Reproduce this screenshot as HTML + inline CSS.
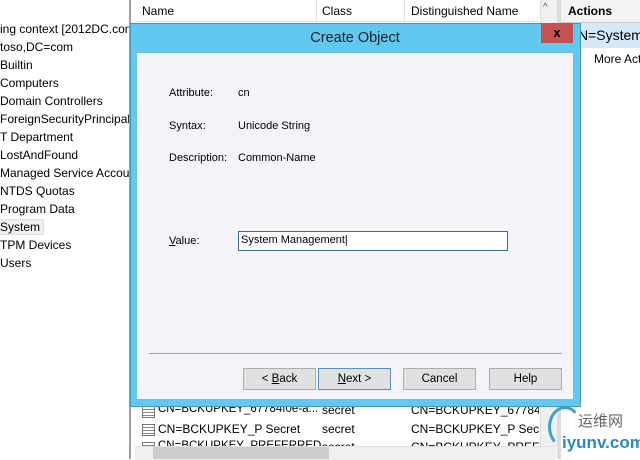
<!DOCTYPE html><html><head><style>
body{margin:0;width:640px;height:459px;overflow:hidden;background:#fff;font-family:"Liberation Sans",sans-serif;font-size:12px;color:#000;position:relative}
.a{position:absolute;white-space:nowrap}
.btn{position:absolute;top:368px;width:71px;height:20px;border:1px solid #adadad;background:#e1e1e1;text-align:center;line-height:20px;font-size:11.5px}
</style></head><body>
<!-- left tree -->
<div class="a" style="left:0;top:20px;line-height:18px;font-size:12px;width:129px;overflow:hidden">
<div>ing context [2012DC.con</div><div>toso,DC=com</div><div>Builtin</div><div>Computers</div><div>Domain Controllers</div><div>ForeignSecurityPrincipals</div><div>T Department</div><div>LostAndFound</div><div>Managed Service Accour</div><div>NTDS Quotas</div><div>Program Data</div><div><span style="background:#f0f0f0;outline:1px solid #e0e0e0">System&nbsp;</span></div><div>TPM Devices</div><div>Users</div></div>
<div class="a" style="left:129px;top:0;width:2px;height:459px;background:#a0a0a0"></div>
<!-- list header -->
<div class="a" style="left:135px;top:0;width:405px;height:21px;border-bottom:1px solid #e5e5e5"></div>
<div class="a" style="left:142px;top:4px">Name</div>
<div class="a" style="left:316px;top:0;width:1px;height:21px;background:#e5e5e5"></div>
<div class="a" style="left:322px;top:4px">Class</div>
<div class="a" style="left:404px;top:0;width:1px;height:21px;background:#e5e5e5"></div>
<div class="a" style="left:411px;top:4px">Distinguished Name</div>
<div class="a" style="left:540px;top:0;width:16px;height:446px;background:#f0f0f0;border-left:1px solid #e0e0e0"></div>
<div class="a" style="left:543px;top:2px;font-size:10px;color:#555">^</div>
<div class="a" style="left:557px;top:0;width:4px;height:459px;background:#dcdcdc"></div>
<!-- list rows -->
<div class="a" style="left:158px;top:403px;font-size:11.5px">CN=BCKUPKEY_67784f0e-a...</div><div class="a" style="left:322px;top:403px">secret</div><div class="a" style="left:411px;top:403px;width:128px;overflow:hidden">CN=BCKUPKEY_67784f0</div>
<div class="a" style="left:158px;top:422px">CN=BCKUPKEY_P Secret</div><div class="a" style="left:322px;top:422px">secret</div><div class="a" style="left:411px;top:422px;width:128px;overflow:hidden">CN=BCKUPKEY_P Secret</div>
<div class="a" style="left:158px;top:440px;font-size:11.5px">CN=BCKUPKEY_PREFERRED</div><div class="a" style="left:322px;top:440px">secret</div><div class="a" style="left:411px;top:440px;width:128px;overflow:hidden">CN=BCKUPKEY_PREFERR</div>
<div class="a" style="left:142px;top:406px;width:11px;height:10px;border:1px solid #777;background:repeating-linear-gradient(#fff 0 2px,#888 2px 3px)"></div>
<div class="a" style="left:142px;top:424px;width:11px;height:10px;border:1px solid #777;background:repeating-linear-gradient(#fff 0 2px,#888 2px 3px)"></div>
<div class="a" style="left:142px;top:442px;width:11px;height:10px;border:1px solid #777;background:repeating-linear-gradient(#fff 0 2px,#888 2px 3px)"></div>
<div class="a" style="left:135px;top:446px;width:421px;height:13px;background:#f0f0f0;border-top:1px solid #e0e0e0"></div>
<div class="a" style="left:153px;top:447px;width:176px;height:12px;background:#cdcdcd"></div>
<!-- actions -->
<div class="a" style="left:561px;top:0;width:79px;height:22px;background:#f3f3f3;border-bottom:1px solid #ccc"></div>
<div class="a" style="left:568px;top:4px;font-weight:bold">Actions</div>
<div class="a" style="left:561px;top:23px;width:79px;height:25px;background:#d7e9f7"></div>
<div class="a" style="left:578px;top:27px;font-size:14px">N=System</div>
<div class="a" style="left:594px;top:52px">More Act</div>
<!-- watermark -->
<div class="a" style="left:548px;top:406px;width:28px;height:36px;border:3px solid #3aa0d8;border-radius:50%;border-right-color:transparent;border-bottom-color:transparent"></div>
<div class="a" style="left:578px;top:410px;font-size:15px;color:#666;font-family:'Noto Sans CJK SC',sans-serif">运维网</div>
<div class="a" style="left:562px;top:433px;font-size:17px;font-weight:bold;color:#2a88c8">iyunv.com</div>
<!-- dialog -->
<div class="a" style="left:130px;top:23px;width:449px;height:382px;background:#63c8ef;border:1px solid #3a9cc4"></div>
<div class="a" style="left:137px;top:53px;width:436px;height:346px;background:#f4f3f7"></div>
<div class="a" style="left:130px;top:30px;width:450px;text-align:center;font-size:14.5px;color:#222">Create Object</div>
<div class="a" style="left:541px;top:23px;width:32px;height:20px;background:#c75050;color:#000;text-align:center;font-weight:bold;font-size:13px;line-height:19px">x</div>
<div class="a" style="left:169px;top:87px;font-size:11px">Attribute:</div><div class="a" style="left:238px;top:87px;font-size:11px">cn</div>
<div class="a" style="left:169px;top:120px;font-size:11px">Syntax:</div><div class="a" style="left:238px;top:120px;font-size:11px">Unicode String</div>
<div class="a" style="left:169px;top:152px;font-size:11px">Description:</div><div class="a" style="left:238px;top:152px;font-size:11px">Common-Name</div>
<div class="a" style="left:169px;top:235px;font-size:11px"><u>V</u>alue:</div>
<div class="a" style="left:238px;top:231px;width:268px;height:18px;border:1px solid #3c6e8f;background:#fff"></div>
<div class="a" style="left:241px;top:234px;font-size:11px">System Management|</div>
<div class="a" style="left:149px;top:353px;width:413px;height:1px;background:#a0a0a0"></div>
<div class="btn" style="left:243px">&lt; <u>B</u>ack</div>
<div class="btn" style="left:318px;border-color:#5a8fbf"><u>N</u>ext &gt;</div>
<div class="btn" style="left:403px">Cancel</div>
<div class="btn" style="left:489px">Help</div>
</body></html>
